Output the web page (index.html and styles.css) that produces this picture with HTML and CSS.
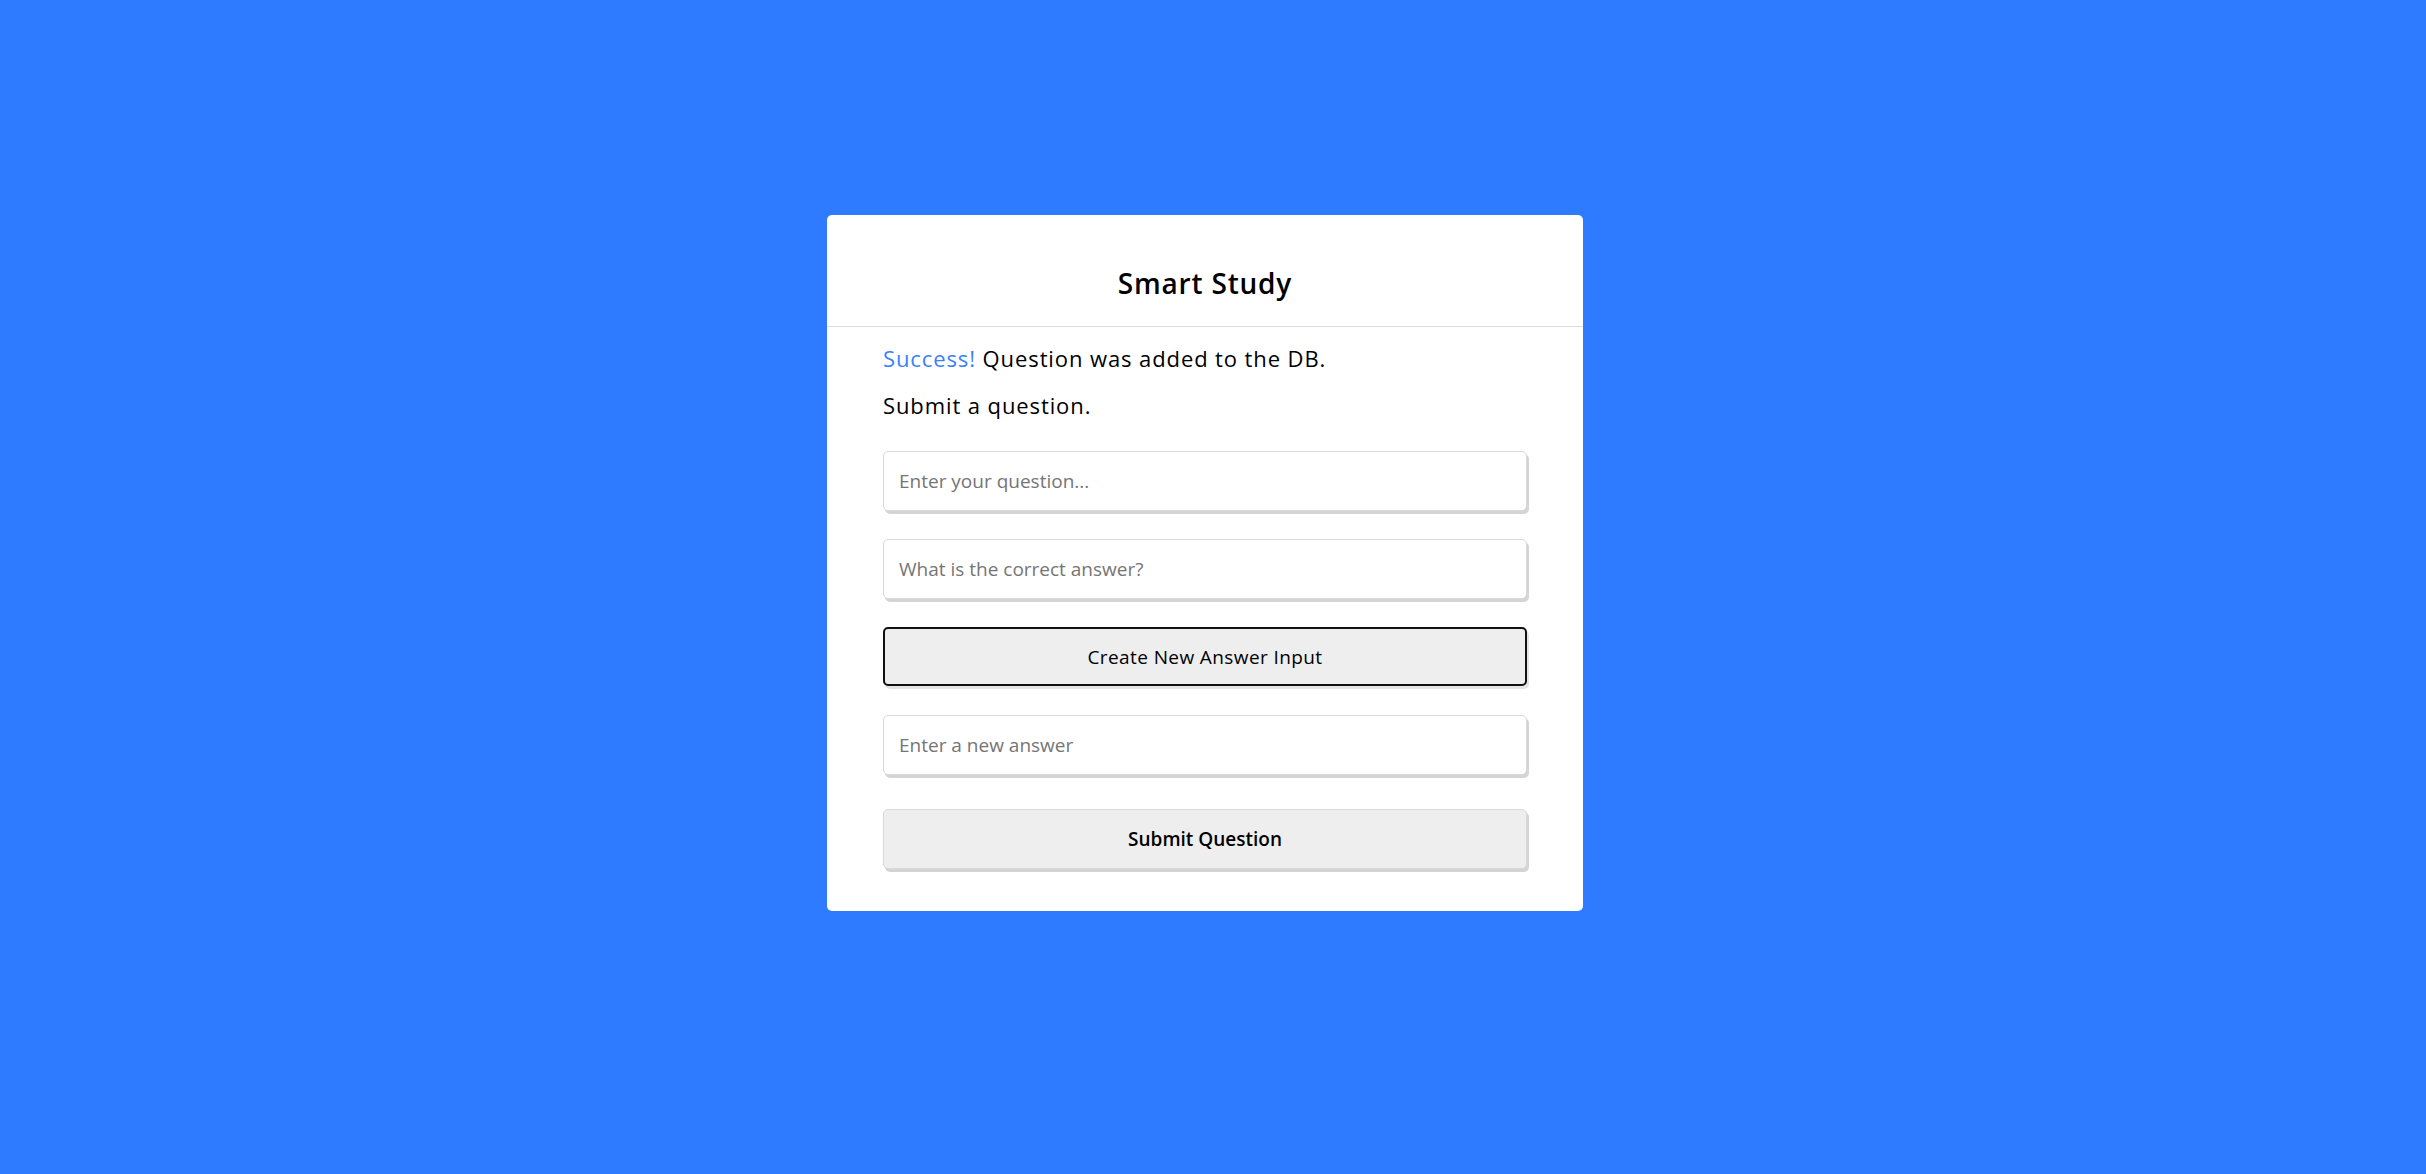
FILE: index.html
```html
<!DOCTYPE html>
<html lang="en">
<head>
<meta charset="utf-8">
<title>Smart Study</title>
<link rel="stylesheet" href="styles.css">
</head>
<body>
  <main class="card">
    <header class="card-header">
      <h1 class="title">Smart Study</h1>
    </header>
    <section class="card-body">
      <p class="status"><span class="success">Success!</span> Question was added to the DB.</p>
      <p class="prompt">Submit a question.</p>
      <form class="form">
        <input class="field" type="text" placeholder="Enter your question...">
        <input class="field" type="text" placeholder="What is the correct answer?">
        <button class="btn btn-outline" type="button">Create New Answer Input</button>
        <input class="field" type="text" placeholder="Enter a new answer">
        <button class="btn btn-submit" type="button">Submit Question</button>
      </form>
    </section>
  </main>
</body>
</html>
```

FILE: styles.css
```css
* { box-sizing: border-box; }

html, body {
  margin: 0;
  padding: 0;
}

body {
  background: #2f7bff;
  font-family: "Open Sans", "Liberation Sans", sans-serif;
  color: #000;
  min-height: 1174px;
}

.card {
  width: 756px;
  margin: 215px 0 0 827px;
  background: #fff;
  border-radius: 5px;
  padding-bottom: 42px;
}

.card-header {
  height: 112px;
  border-bottom: 1px solid #dcdcdc;
  display: flex;
  align-items: center;
  justify-content: center;
  padding-top: 24px;
}

.title {
  margin: 0;
  font-size: 28px;
  font-weight: 600;
  letter-spacing: 0.8px;
}

.card-body {
  padding: 0 56px;
}

.status {
  margin: 16px 0 0;
  font-size: 22px;
  line-height: 30px;
  letter-spacing: 0.9px;
}

.success {
  color: #3a7ffb;
}

.prompt {
  margin: 17px 0 0;
  font-size: 22px;
  line-height: 30px;
  letter-spacing: 0.9px;
}

.form {
  margin-top: 31px;
  display: flex;
  flex-direction: column;
}

.field {
  display: block;
  width: 100%;
  height: 60px;
  border: 1px solid #d9d9d9;
  border-radius: 5px;
  box-shadow: 2px 3px 0 #d4d4d4;
  padding: 0 15px;
  font-family: inherit;
  font-size: 19px;
  letter-spacing: 0;
  color: #000;
  background: #fff;
  outline: none;
  margin-bottom: 28px;
}

.field::placeholder {
  color: #757575;
}

.btn {
  display: block;
  width: 100%;
  font-family: inherit;
  color: #000;
  background: #eeeeee;
  border-radius: 5px;
  cursor: pointer;
}

.btn-outline {
  height: 59px;
  border: 2px solid #111;
  font-size: 19px;
  font-weight: 400;
  letter-spacing: 0.4px;
  box-shadow: 2px 3px 0 #e4e4e4;
  margin-bottom: 29px;
}

.btn-submit {
  height: 60px;
  border: 1px solid #d9d9d9;
  box-shadow: 2px 3px 0 #d4d4d4;
  font-size: 19px;
  font-weight: 600;
  margin-top: 6px;
}
```
